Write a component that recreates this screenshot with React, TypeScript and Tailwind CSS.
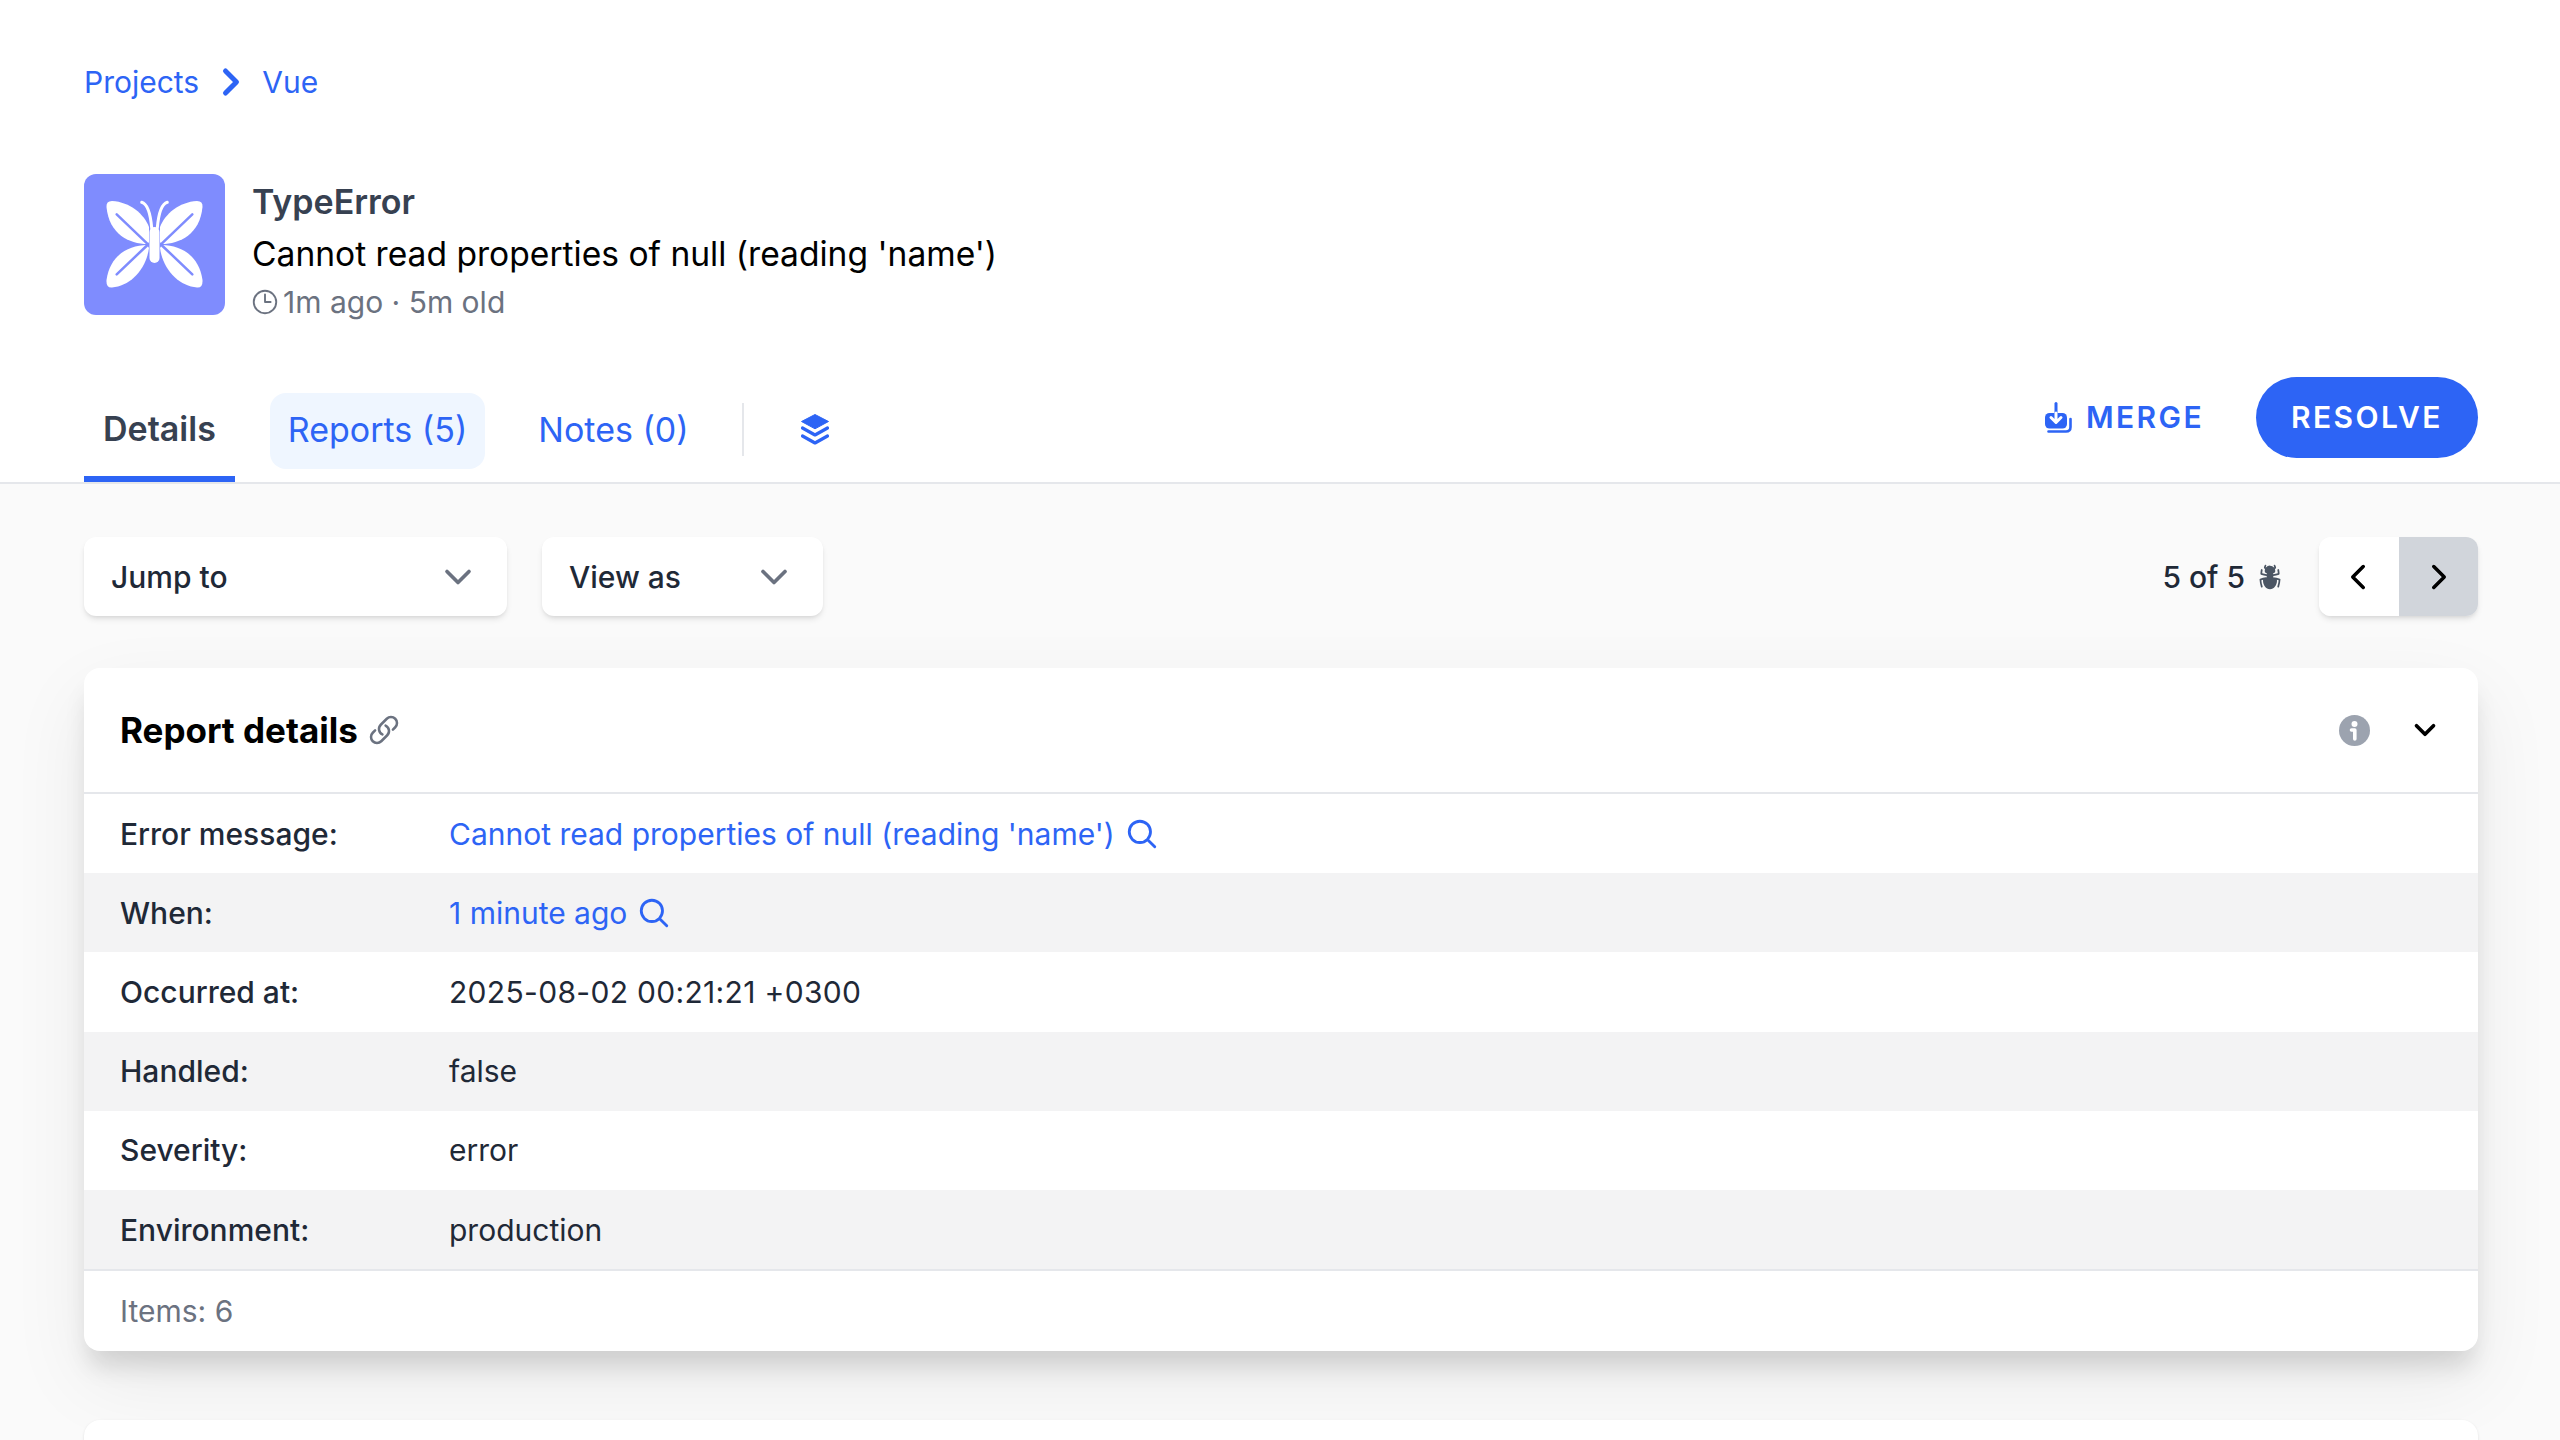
import { ChevronDown, ChevronLeft, ChevronRight } from "lucide-react";
import { HiBugAnt, HiOutlineClock, HiOutlineLink, HiOutlineMagnifyingGlass } from "react-icons/hi2";

const rows = [
  { label: "Error message:", value: "Cannot read properties of null (reading 'name')", link: true },
  { label: "When:", value: "1 minute ago", link: true },
  { label: "Occurred at:", value: <span className="tracking-[0.32px]">2025-08-02 00:21:21 +0300</span> },
  { label: "Handled:", value: "false" },
  { label: "Severity:", value: "error" },
  { label: "Environment:", value: "production" },
];

function ButterflySide() {
  return (
    <>
      <path d="M63.5 70 C45 70 25 60 22.5 33 Q22 27 28 27 C46 28 60 40 65 53 V68 Z" fill="#fff" />
      <path d="M63 71 C45 71 26 81 22.5 106 Q22 114 28 113.5 C46 112 62 96 65 74 Z" fill="#fff" />
      <path d="M67.7 54 C66.5 40 63.5 30 57.7 28.3" fill="none" stroke="#fff" strokeWidth="3" strokeLinecap="round" />
      <path d="M32.7 40.3 L63 69.3 M32.7 100.3 L63 71.5" fill="none" stroke="#7f8cfe" strokeWidth="2.5" strokeLinecap="round" />
    </>
  );
}

function Butterfly() {
  return (
    <svg viewBox="0 0 141 141" className="w-[141px] h-[141px]">
      <ButterflySide />
      <g transform="translate(141 0) scale(-1 1)">
        <ButterflySide />
      </g>
      <rect x="65.5" y="53" width="10" height="36" rx="5" fill="#fff" />
    </svg>
  );
}

function MergeIcon() {
  return (
    <svg viewBox="0 0 27 31" className="w-[27px] h-[31px]" fill="none">
      <rect x="0" y="11" width="22" height="15.5" rx="4.5" fill="#2d64f5" />
      <path d="M11 1.5 V11" stroke="#2d64f5" strokeWidth="3" strokeLinecap="round" />
      <path d="M11 11 V20 M6 15.5 L11 20.5 L16 15.5" stroke="#fff" strokeWidth="3" strokeLinecap="round" strokeLinejoin="round" />
      <path d="M3.5 29.5 H21 Q25.5 29.5 25.5 25 V17" stroke="#2d64f5" strokeWidth="2.6" strokeLinecap="round" />
    </svg>
  );
}

function LayersIcon() {
  return (
    <svg viewBox="0 0 28 31" className="w-[28px] h-[31px] mt-[21px] ml-[57px]" fill="none">
      <path d="M14 0.5 L27.5 7.5 L14 14.8 L0.5 7.5 Z" fill="#2d64f5" stroke="#2d64f5" strokeLinejoin="round" />
      <path d="M1.5 14 L14 21 L26.5 14 M1.5 22 L14 29 L26.5 22" stroke="#2d64f5" strokeWidth="3.2" strokeLinecap="round" strokeLinejoin="round" />
    </svg>
  );
}

function InfoIcon() {
  return (
    <svg viewBox="0 0 31 31" className="w-[31px] h-[31px] ml-auto">
      <circle cx="15.5" cy="15.5" r="15.5" fill="#9ca3af" />
      <circle cx="15.5" cy="9" r="3" fill="#fff" />
      <path d="M12.5 15 H15.8 V24" fill="none" stroke="#fff" strokeWidth="3.6" strokeLinecap="round" strokeLinejoin="round" />
    </svg>
  );
}

export default function App() {
  return (
    <div className="h-[1440px] overflow-hidden bg-[#fafafa] font-['Inter',sans-serif] text-[30px] text-[#1f2937]">

      {/* HEADER */}
      <div className="bg-white border-b-2 border-[#e5e7eb] pl-[84px] pr-[82px] pt-[58px]">
        <div className="flex items-center h-[48px] text-[#2d64f5]">
          <span>Projects</span>
          <ChevronRight className="w-[44px] h-[44px] ml-[10px] mr-[9px]" strokeWidth={2.7} />
          <span>Vue</span>
        </div>

        <div className="flex items-start gap-[27px] mt-[68px]">
          <div className="w-[141px] h-[141px] rounded-xl bg-[#7f8cfe]">
            <Butterfly />
          </div>
          <div className="pt-[3px]">
            <div className="font-semibold text-[34px] text-[#374151] leading-[50px]">TypeError</div>
            <div className="text-[33.6px] text-black leading-[52px] pt-[1px] -mb-[1px]">Cannot read properties of null (reading 'name')</div>
            <div className="flex items-center gap-[3px] text-[#6b7280] leading-[46px]">
              <HiOutlineClock className="w-[30px] h-[30px] -ml-[2px]" />
              <span>1m ago · 5m old</span>
            </div>
          </div>
        </div>

        {/* TABS */}
        <div className="flex items-start justify-between h-[105px] mt-[52px]">
          <div className="flex items-start h-full pt-[16px] text-[34px]">
            <div className="h-[89px] px-[19px] pt-[10px] border-b-[6px] border-[#2d64f5] font-semibold text-[#374151]">Details</div>
            <div className="h-[76px] flex items-center ml-[35px] px-[18px] pb-[3px] rounded-2xl bg-[#eff6ff] text-[#2d64f5]">Reports (5)</div>
            <div className="h-[76px] flex items-center ml-[35px] px-[18px] pb-[3px] text-[#2d64f5]">Notes (0)</div>
            <div className="w-[2px] h-[53px] mt-[10px] ml-[35px] bg-[#e5e7eb]" />
            <LayersIcon />
          </div>
          <div className="flex items-center">
            <div className="flex items-center gap-[14px] mr-[52px] font-semibold tracking-[0.08em] text-[#2d64f5]">
              <MergeIcon />
              MERGE
            </div>
            <div className="h-[81px] w-[222px] flex items-center justify-center rounded-full bg-[#2d64f5] font-semibold tracking-[0.08em] text-white">RESOLVE</div>
          </div>
        </div>
      </div>

      {/* MAIN */}
      <div className="pl-[84px] pr-[82px]">

        {/* TOOLBAR */}
        <div className="flex items-center h-[79px] mt-[53px] font-medium">
          <div className="w-[423px] h-full flex items-center justify-between pl-[27px] pr-[27px] bg-white rounded-xl shadow-md">
            <span className="pt-[1px]">Jump to</span>
            <ChevronDown className="w-[44px] h-[44px] text-[#6b7280]" strokeWidth={2} />
          </div>
          <div className="w-[281px] h-full flex items-center justify-between ml-[35px] pl-[27px] pr-[27px] bg-white rounded-xl shadow-md">
            <span className="pt-[1px]">View as</span>
            <ChevronDown className="w-[44px] h-[44px] text-[#6b7280]" strokeWidth={2} />
          </div>
          <div className="flex items-center ml-auto">
            <span className="pt-[1px]">5 of 5</span>
            <HiBugAnt className="w-[28px] h-[28px] ml-[11px] text-[#4b5563]" />
            <div className="flex h-[79px] w-[159px] ml-[35px] rounded-xl shadow-md overflow-hidden">
              <div className="w-[80px] flex items-center justify-center pr-[2px] bg-white"><ChevronLeft className="w-[42px] h-[42px] text-black" strokeWidth={2} /></div>
              <div className="flex-1 flex items-center justify-center bg-[#d1d5db]"><ChevronRight className="w-[42px] h-[42px] text-black" strokeWidth={2} /></div>
            </div>
          </div>
        </div>

        {/* REPORT DETAILS */}
        <div className="mt-[52px] bg-white rounded-2xl shadow-[0_20px_25px_-5px_rgba(0,0,0,0.13),0_30px_80px_rgba(0,0,0,0.07)] overflow-hidden">
          <div className="flex items-center h-[126px] px-[36px] border-b-2 border-[#e5e7eb]">
            <span className="font-bold text-[35px] text-black">Report details</span>
            <HiOutlineLink className="w-[32px] h-[32px] ml-[10px] text-[#6b7280]" strokeWidth={1.9} />
            <InfoIcon />
            <ChevronDown className="w-[34px] h-[34px] ml-[38px] text-black" strokeWidth={2.6} />
          </div>

          {rows.map((row, index) => (
            <div key={row.label} className={`flex items-center h-[79.2px] pl-[36px] pt-[1px] ${index % 2 ? "bg-[#f3f3f4]" : "bg-white"}`}>
              <div className="w-[329px] font-medium">{row.label}</div>
              {row.link ? (
                <div className="flex items-center gap-[10px] text-[#2d64f5]">
                  {row.value}
                  <HiOutlineMagnifyingGlass className="w-[34px] h-[34px]" strokeWidth={2} />
                </div>
              ) : (
                <div>{row.value}</div>
              )}
            </div>
          ))}

          <div className="flex items-center h-[82px] pl-[36px] border-t-2 border-[#e5e7eb] text-[#6b7280]">Items: 6</div>
        </div>

        {/* NEXT CARD */}
        <div className="mt-[69px] h-[200px] bg-white rounded-2xl shadow-sm" />

      </div>
    </div>
  );
}
